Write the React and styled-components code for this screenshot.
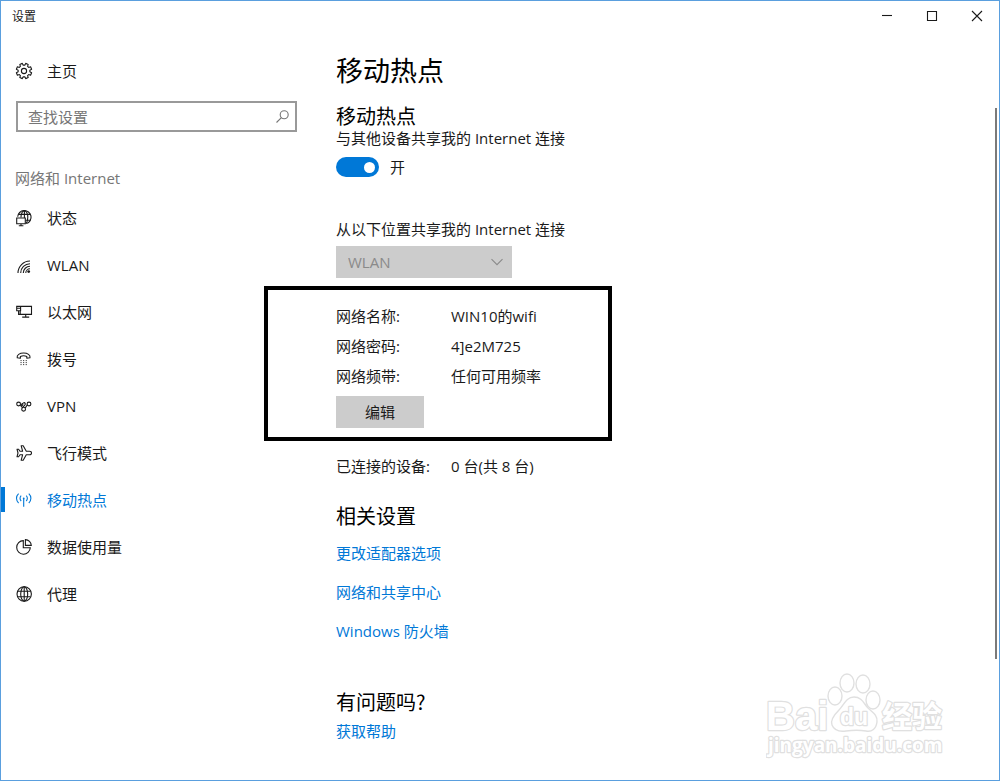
import React, { useState } from 'react'
import styled, { createGlobalStyle } from 'styled-components'

// STYLES
const GlobalStyle = createGlobalStyle`
  :root {
    --accent: #0078d7;
    --text: #1a1a1a;
    --muted: #767676;
    --fill: #cccccc;
    --frame: #5a9fde;
    --heading-font: "Noto Sans CJK SC", sans-serif;
  }

  * {
    box-sizing: border-box;
  }

  body {
    margin: 0;
    background: #fff;
    color: var(--text);
    font-family: "Open Sans", "Noto Sans CJK SC", sans-serif;
    font-size: 15px;
    line-height: 20px;
  }

  button, input, select {
    font: inherit;
    color: inherit;
  }
`

const Window = styled.div`
  position: relative;
  display: flex;
  flex-direction: column;
  min-height: 100vh;
  border: 1px solid var(--frame);
`

const TitleBar = styled.header`
  display: flex;
  align-items: center;
  justify-content: space-between;
  height: 30px;
  padding-left: 11px;
  font-family: var(--heading-font);
  font-size: 12px;
`

const WindowButtons = styled.div`
  display: flex;
`

const WindowButton = styled.button`
  display: flex;
  align-items: center;
  justify-content: center;
  width: 45px;
  height: 30px;
  padding: 0;
  border: 0;
  background: none;
`

const Body = styled.div`
  display: flex;
  flex: 1;
`

const Sidebar = styled.aside`
  width: 311px;
  flex-shrink: 0;
`

const NavLink = styled.a`
  display: flex;
  align-items: center;
  gap: 15px;
  height: 47px;
  padding-left: 11px;
  border-left: 4px solid ${({ $active }) => ($active ? 'var(--accent)' : 'transparent')};
  border-image: ${({ $active }) =>
    $active ? 'linear-gradient(transparent 24%, var(--accent) 24% 75%, transparent 75%) 1' : 'none'};
  color: ${({ $active }) => ($active ? 'var(--accent)' : 'inherit')};
  text-decoration: none;
`

const HomeLink = styled(NavLink)`
  margin-top: 16px;
`

const Search = styled.label`
  display: flex;
  align-items: center;
  height: 31px;
  margin: 7px 15px 0 15px;
  padding: 0 6px 0 10px;
  border: 2px solid #999;
`

const SearchInput = styled.input`
  flex: 1;
  min-width: 0;
  padding: 0;
  border: 0;
  outline: 0;
  background: none;

  &::placeholder {
    color: var(--muted);
    opacity: 1;
  }
`

const NavHeading = styled.h2`
  margin: 36px 0 6px 14px;
  color: var(--muted);
  font-size: 15px;
  font-weight: normal;
`

const Main = styled.main`
  flex: 1;
  padding: 21px 24px 38px;
`

const Title = styled.h1`
  margin: 0 0 16px;
  color: #000;
  font-family: var(--heading-font);
  font-size: 27px;
  font-weight: normal;
  line-height: 36px;
`

const Subtitle = styled.h2`
  margin: 0;
  color: #000;
  font-family: var(--heading-font);
  font-size: 20px;
  font-weight: normal;
  line-height: 24px;
`

const Text = styled.p`
  margin: 0;
`

const SwitchRow = styled.label`
  display: flex;
  align-items: center;
  gap: 11px;
  width: fit-content;
  margin-top: 9px;
`

const Switch = styled.input`
  display: flex;
  align-items: center;
  appearance: none;
  width: 43px;
  height: 20px;
  margin: 0;
  padding: 0 4px;
  border-radius: 10px;
  background: #999;

  &::before {
    content: '';
    width: 11px;
    height: 11px;
    border-radius: 50%;
    background: #fff;
  }

  &:checked {
    justify-content: flex-end;
    background: var(--accent);
  }
`

const FieldLabel = styled.label`
  display: block;
  margin: 42px 0 7px;
`

const SelectBox = styled.div`
  position: relative;
  width: 176px;

  svg {
    position: absolute;
    top: 10px;
    right: 9px;
    pointer-events: none;
  }
`

const Select = styled.select`
  display: block;
  appearance: none;
  width: 100%;
  height: 32px;
  padding: 0 32px 0 12px;
  border: 0;
  border-radius: 0;
  background: var(--fill);
  color: #8a8a8a;
  opacity: 1;
`

const Highlight = styled.section`
  display: flex;
  flex-direction: column;
  align-items: flex-start;
  gap: 10px;
  width: 348px;
  margin: 8px 0 15px -72px;
  padding: 16px 0 9px 68px;
  border: 4px solid #000;
`

const Details = styled.dl`
  display: grid;
  grid-template-columns: 115px auto;
  row-gap: 10px;
  margin: 0;

  dd {
    margin: 0;
  }
`

const EditButton = styled.button`
  width: 88px;
  height: 32px;
  padding: 0;
  border: 0;
  background: var(--fill);
`

const Links = styled.nav`
  display: flex;
  flex-direction: column;
  align-items: flex-start;
  gap: 19px;
  margin-top: ${({ $close }) => ($close ? '7px' : '15px')};
`

const Link = styled.a`
  color: var(--accent);
  text-decoration: none;
`

const Group = styled.section`
  margin-top: ${({ $far }) => ($far ? '49px' : '28px')};
`

const ScrollTrack = styled.div`
  width: 4px;
  padding: 77px 2px 121px 0;
  display: flex;
`

const ScrollThumb = styled.div`
  flex: 1;
  background: #7a7a7a;
`

const Watermark = styled.svg`
  position: absolute;
  right: 49px;
  bottom: 16px;
  pointer-events: none;
`

const Icon = styled.svg`
  flex-shrink: 0;
  overflow: visible;
  fill: none;
  stroke: currentColor;
  stroke-width: 1.1;
`

// ICONS
const gearPath = () => {
  const points = []
  for (let i = 0; i < 8; i++) {
    const steps = [[-15, 5.9], [-10, 7.8], [10, 7.8], [15, 5.9]]
    steps.forEach(([offset, r]) => {
      const a = ((i * 45 + 22.5 + offset) * Math.PI) / 180
      points.push(`${(8 + r * Math.cos(a)).toFixed(2)} ${(8 + r * Math.sin(a)).toFixed(2)}`)
    })
  }
  return `M${points.join('L')}Z`
}

const icons = {
  home: (
    <>
      <path d={gearPath()} strokeLinejoin="round" />
      <circle cx="8" cy="8" r="2.6" />
    </>
  ),
  status: (
    <>
      <path d="M1.7 6.8A6.7 6.7 0 1 1 10.5 13.6" />
      <path d="M5 7.5C5 3.5 6.6.6 8.4.6S11.8 3.5 11.8 7.3 10.8 12.6 10 13.6M8.4.6V8M2.4 4.4H14.4M9.5 10.2H14.4" />
      <path d="M.7 8H9.3V13.7H.7ZM5 13.7V15.6M2.8 15.7H7.4" fill="#fff" />
    </>
  ),
  wlan: (
    <>
      <path d="M2 16A12 12 0 0 1 14 4M4.7 16A9.3 9.3 0 0 1 14 6.7M7.3 16A6.7 6.7 0 0 1 14 9.3M9.8 16A4.2 4.2 0 0 1 14 11.8" />
      <circle cx="12.7" cy="14.6" r="1.4" fill="currentColor" stroke="none" />
    </>
  ),
  ethernet: <path d="M5 2.4H15.5V10.4H4.2V7M.7 2.4H4.6V6.7H.7ZM.7 4.2H4.6M2.6 6.7V10.4H4.2M9.7 10.4V12.9M6.2 13.1H13.2" />,
  dialup: (
    <>
      <path d="M1.2 6.8C.6 4 3.6 2 7.6 2S14.6 4 14 6.8L10.8 7.2V5.4C9 4.6 6.2 4.6 4.4 5.4V7.2Z" strokeLinejoin="round" />
      <path d="M4.5 9.6H10.9M4.5 11.6H10.9M4.5 13.6H10.9" strokeDasharray="1.1 1.5" strokeWidth=".9" />
    </>
  ),
  vpn: (
    <>
      <circle cx="2.6" cy="6" r="1.9" />
      <circle cx="13" cy="6" r="1.9" />
      <circle cx="7.6" cy="11.2" r="1.9" />
      <path d="M4.4 6.5C6 7.2 6.4 5 7.8 4.7S9.8 6.3 8.8 7.2L5.9 10.2M11.3 6.8L9.2 10.1M4.2 7.2L5.4 8.4 7.2 6.3" />
    </>
  ),
  plane: (
    <path
      d="M5.2.8H7.2L10.3 6.2H13.4C14.7 6.2 15.5 7 15.5 8S14.7 9.8 13.4 9.8H10.3L7.2 15.2H5.2L6.6 9.8H4L2.6 11.8H1L2 8 1 4.2H2.6L4 6.2H6.6Z"
      strokeLinejoin="round"
    />
  ),
  hotspot: (
    <>
      <path d="M7.7 6.4V14.8M5.2 9A3.6 3.6 0 0 1 5.2 3.7M10.2 3.7A3.6 3.6 0 0 1 10.2 9M2.6 11C-.2 8.2-.2 4.3 2.6 1.6M12.8 1.6C15.6 4.3 15.6 8.2 12.8 11" />
      <circle cx="7.7" cy="6.4" r=".9" fill="currentColor" stroke="none" />
    </>
  ),
  data: <path d="M7.3 1.6A6.8 6.8 0 1 0 14.3 8.8H7.3ZM9.4.6V6.4H15.3A6 6 0 0 0 9.4.6Z" />,
  proxy: (
    <>
      <circle cx="8.2" cy="8" r="7.2" />
      <ellipse cx="8.2" cy="8" rx="3.5" ry="7.2" />
      <path d="M8.2.8V15.2M1.9 5.2H14.5M1.9 10.8H14.5" />
    </>
  ),
}

const NavIcon = ({ name }) => (
  <Icon width="16" height="16" viewBox="0 0 16 16" aria-hidden="true">{icons[name]}</Icon>
)

// DATA
const navItems = [
  ['status', '状态'],
  ['wlan', 'WLAN'],
  ['ethernet', '以太网'],
  ['dialup', '拨号'],
  ['vpn', 'VPN'],
  ['plane', '飞行模式'],
  ['hotspot', '移动热点'],
  ['data', '数据使用量'],
  ['proxy', '代理'],
]

const network = [
  ['网络名称:', 'WIN10的wifi'],
  ['网络密码:', '4]e2M725'],
  ['网络频带:', '任何可用频率'],
]

const BaiduMark = () => (
  <Watermark width="184" height="94" viewBox="0 0 184 94" fill="#fff" stroke="#e0e0e0" strokeWidth="1.4" aria-label="Baidu 经验">
    <ellipse cx="69" cy="26" rx="7" ry="9" />
    <ellipse cx="81" cy="13" rx="7" ry="9" />
    <ellipse cx="97" cy="14" rx="7" ry="9" />
    <ellipse cx="107" cy="30" rx="7" ry="9" />
    <path d="M88 27C80 27 78 35 73 40S64 50 66 55 73 62 80 61 94 60 100 61 110 59 111 52 106 42 102 38 96 27 88 27Z" />
    <g fontWeight="bold" strokeWidth="2.4" paintOrder="stroke" strokeLinejoin="round">
      <text x="0" y="60" fontSize="40" fontFamily="Liberation Sans">Bai</text>
      <text x="74" y="55" fontSize="23" fontFamily="Liberation Sans">du</text>
      <text x="116" y="57" fontSize="30" fontFamily="Noto Sans CJK SC">经验</text>
      <text x="2" y="82" fontSize="19" fontFamily="Open Sans">jingyan.baidu.com</text>
    </g>
  </Watermark>
)

// TEMPLATE
const App = () => {
  const [active, setActive] = useState('hotspot')
  const [on, setOn] = useState(true)

  return (
    <Window>
      <GlobalStyle />
      <TitleBar>
        <span>设置</span>
        <WindowButtons>
          <WindowButton aria-label="最小化">
            <Icon width="10" height="10" viewBox="0 0 10 10"><path d="M0 4.5H10" /></Icon>
          </WindowButton>
          <WindowButton aria-label="最大化">
            <Icon width="10" height="10" viewBox="0 0 10 10"><path d="M.5 .5H9.5V9.5H.5Z" /></Icon>
          </WindowButton>
          <WindowButton aria-label="关闭">
            <Icon width="10" height="10" viewBox="0 0 10 10"><path d="M0 0L10 10M10 0L0 10" /></Icon>
          </WindowButton>
        </WindowButtons>
      </TitleBar>

      <Body>
        <Sidebar>
          <HomeLink href="#home"><NavIcon name="home" />主页</HomeLink>
          <Search>
            <SearchInput type="text" placeholder="查找设置" aria-label="查找设置" />
            <Icon width="13" height="13" viewBox="0 0 13 13" color="#767676">
              <circle cx="8.2" cy="4.8" r="4" />
              <path d="M5.4 7.7L.5 12.5" />
            </Icon>
          </Search>
          <NavHeading>网络和 Internet</NavHeading>
          <nav>
            {navItems.map(([name, label]) => (
              <NavLink key={name} href={`#${name}`} $active={active === name} onClick={() => setActive(name)}>
                <NavIcon name={name} />
                {label}
              </NavLink>
            ))}
          </nav>
        </Sidebar>

        <Main>
          <Title>移动热点</Title>
          <Subtitle>移动热点</Subtitle>
          <Text>与其他设备共享我的 Internet 连接</Text>
          <SwitchRow>
            <Switch type="checkbox" role="switch" checked={on} onChange={() => setOn(!on)} />
            {on ? '开' : '关'}
          </SwitchRow>

          <FieldLabel htmlFor="source">从以下位置共享我的 Internet 连接</FieldLabel>
          <SelectBox>
            <Select id="source" disabled>
              <option>WLAN</option>
            </Select>
            <Icon width="12" height="12" viewBox="0 0 12 12" color="#8a8a8a"><path d="M.5 3.2L6 8.7 11.5 3.2" /></Icon>
          </SelectBox>

          <Highlight>
            <Details>
              {network.map(([term, value]) => (
                <React.Fragment key={term}>
                  <dt>{term}</dt>
                  <dd>{value}</dd>
                </React.Fragment>
              ))}
            </Details>
            <EditButton>编辑</EditButton>
          </Highlight>

          <Details>
            <dt>已连接的设备:</dt>
            <dd>0 台(共 8 台)</dd>
          </Details>

          <Group>
            <Subtitle>相关设置</Subtitle>
            <Links>
              <Link href="#adapter">更改适配器选项</Link>
              <Link href="#sharing">网络和共享中心</Link>
              <Link href="#firewall">Windows 防火墙</Link>
            </Links>
          </Group>

          <Group $far>
            <Subtitle>有问题吗?</Subtitle>
            <Links $close>
              <Link href="#help">获取帮助</Link>
            </Links>
          </Group>
        </Main>

        <ScrollTrack>
          <ScrollThumb />
        </ScrollTrack>
      </Body>
      <BaiduMark />
    </Window>
  )
}

export default App
